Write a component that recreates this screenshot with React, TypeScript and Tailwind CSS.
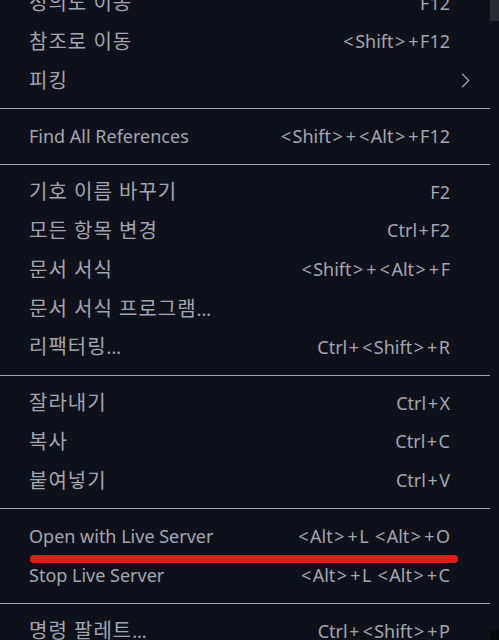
import React from "react";

type Item = { label: string; shortcut?: string; sub?: boolean } | "sep";

const items: Item[] = [
  { label: "정의도 이동", shortcut: "F12" },
  { label: "참조로 이동", shortcut: "<Shift>+F12" },
  { label: "피킹", sub: true },
  "sep",
  { label: "Find All References", shortcut: "<Shift>+<Alt>+F12" },
  "sep",
  { label: "기호 이름 바꾸기", shortcut: "F2" },
  { label: "모든 항목 변경", shortcut: "Ctrl+F2" },
  { label: "문서 서식", shortcut: "<Shift>+<Alt>+F" },
  { label: "문서 서식 프로그램..." },
  { label: "리팩터링...", shortcut: "Ctrl+<Shift>+R" },
  "sep",
  { label: "잘라내기", shortcut: "Ctrl+X" },
  { label: "복사", shortcut: "Ctrl+C" },
  { label: "붙여넣기", shortcut: "Ctrl+V" },
  "sep",
  { label: "Open with Live Server", shortcut: "<Alt>+L <Alt>+O" },
  { label: "Stop Live Server", shortcut: "<Alt>+L <Alt>+C" },
  "sep",
  { label: "명령 팔레트...", shortcut: "Ctrl+<Shift>+P" },
];

function Label({ text }: { text: string }) {
  const parts = text.split(/([\u3131-\uD79D]+(?:\s+[\u3131-\uD79D]+)*)/);
  return (
    <span className="whitespace-nowrap">
      {parts.map((p, i) =>
        /[\u3131-\uD79D]/.test(p) ? (
          <span key={i} className="text-[20px] tracking-[1px]">
            {p}
          </span>
        ) : (
          <span key={i}>{p}</span>
        )
      )}
    </span>
  );
}

function Shortcut({ text }: { text: string }) {
  const parts = text.split(/([<>+])/);
  return (
    <span className="flex-1 text-right whitespace-nowrap">
      {parts.map((p, i) =>
        p === "<" || p === ">" || p === "+" ? (
          <span key={i} className="px-[1.5px]">
            {p}
          </span>
        ) : (
          <span key={i}>{p}</span>
        )
      )}
    </span>
  );
}

export default function App() {
  return (
    <div
      className="relative flex w-[499px] h-[640px] overflow-hidden bg-[#0f111a] text-[#a3a6b1] text-[18px]"
      style={{ fontFamily: '"Noto Sans", "Noto Sans CJK KR", sans-serif' }}
    >
      <div className="w-[490px] flex flex-col mt-[-16.4px]">
        {items.map((it, i) =>
          it === "sep" ? (
            <div key={i} className="h-[17px] flex flex-col justify-center shrink-0">
              <div className="h-px bg-[#a4a6ae]" />
            </div>
          ) : (
            <div key={i} className="h-[38.8px] shrink-0 flex items-center pl-[29px]">
              <Label text={it.label} />
              <Shortcut text={it.shortcut ?? ""} />
              <span className="w-[40px] flex items-center pl-[11px]">
                {it.sub && (
                  <svg width="9" height="15" viewBox="0 0 9 15" fill="none">
                    <path d="M1 0.8 L7.8 7.5 L1 14.2" stroke="#a3a6b1" strokeWidth="1.2" />
                  </svg>
                )}
              </span>
            </div>
          )
        )}
      </div>
      <div className="w-[9px] flex flex-col justify-between">
        <div className="h-[21px] bg-[#2a2c33]" />
        <div className="h-[10px] bg-[#07080c]" />
      </div>
      <div className="absolute left-[30px] top-[555px] w-[428px] h-[8px] rounded-full bg-[#e21c1c]" />
    </div>
  );
}
